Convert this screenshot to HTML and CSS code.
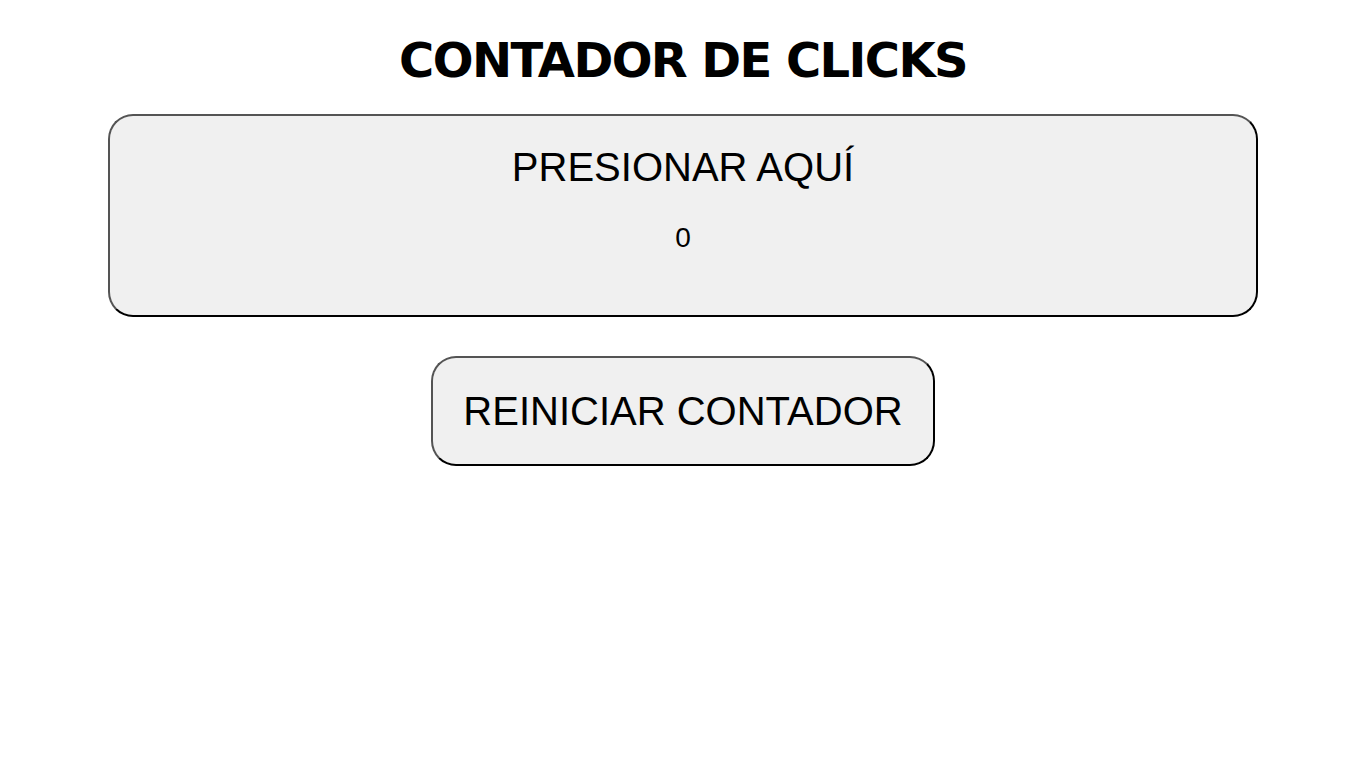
FILE: index.html
```html
<!DOCTYPE html>
<html lang="es">
<head>
<meta charset="utf-8">
<title>Contador de clicks</title>
<link rel="stylesheet" href="styles.css">
</head>
<body>
<main class="app">
  <h1 class="title">CONTADOR DE CLICKS</h1>
  <button class="counter" type="button">
    <span class="counter-label">PRESIONAR AQUÍ</span>
    <span class="counter-value">0</span>
  </button>
  <button class="reset" type="button">REINICIAR CONTADOR</button>
</main>
</body>
</html>
```

FILE: styles.css
```css
html, body {
  margin: 0;
  padding: 0;
  background: #ffffff;
}

.app {
  display: flex;
  flex-direction: column;
  align-items: center;
  padding-top: 32px;
  font-family: "Liberation Sans", Arial, sans-serif;
  color: #000;
}

.title {
  margin: 0 0 26px 0;
  font-family: "DejaVu Sans", Verdana, sans-serif;
  font-weight: bold;
  font-size: 48px;
  line-height: 56px;
  letter-spacing: -1.6px;
  text-align: center;
}

.counter {
  box-sizing: border-box;
  width: 1150px;
  display: flex;
  flex-direction: column;
  align-items: center;
  gap: 33px;
  padding: 28px 20px 62px;
  margin: 0 0 39px 0;
  background: #f0f0f0;
  border: 2px outset #000;
  border-radius: 25px;
  font-family: "Liberation Sans", Arial, sans-serif;
  color: #000;
}

.counter-label {
  font-size: 40px;
  line-height: 46px;
}

.counter-value {
  font-size: 28px;
  line-height: 30px;
}

.reset {
  box-sizing: border-box;
  padding: 30px 30px;
  background: #f0f0f0;
  border: 2px outset #000;
  border-radius: 25px;
  font-family: "Liberation Sans", Arial, sans-serif;
  font-size: 40px;
  line-height: 46px;
  color: #000;
}
```
